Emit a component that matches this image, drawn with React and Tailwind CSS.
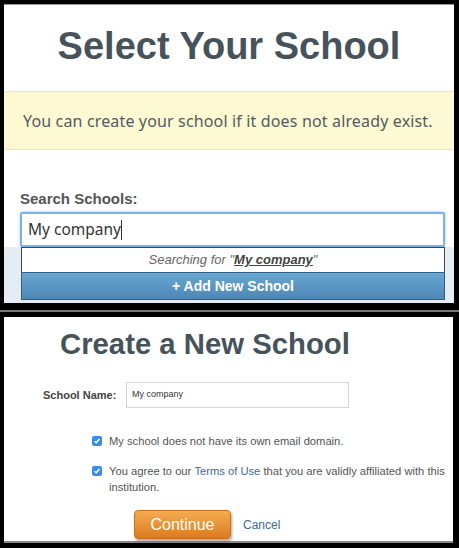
export default function App() {
  return (
    <div className="w-[459px] h-[548px] bg-black overflow-hidden" style={{ fontFamily: '"Liberation Sans", Arial, sans-serif' }}>
      <div className="pt-[4px] pl-[4px]">
        {/* Select panel */}
        <div className="w-[450px] h-[299px] bg-white border-t border-[#9a9a9a] flex flex-col">
          <h1 className="h-[86px] flex items-center justify-center text-[38px] font-bold text-[#46535b] pb-[4px]">
            Select Your School
          </h1>
          <div className="h-[59px] bg-[#fdf9d2] border-y border-[#f0e9a0] flex items-center pl-[19px]">
            <p className="text-[16px] tracking-[0.15px] text-[#555c60]" style={{ fontFamily: '"Noto Sans", "DejaVu Sans", sans-serif' }}>
              You can create your school if it does not already exist.
            </p>
          </div>
          <div className="flex-1 flex flex-col">
            <div className="bg-white pt-[40px] pl-[16px] pr-[9px]">
              <label className="block text-[15px] font-bold text-[#555] leading-[18px] mb-[4px]">Search Schools:</label>
              <div className="h-[35px] border-2 border-[#7bb2ea] rounded-[2px] shadow-[0_0_3px_#9cc6f0] flex items-center pl-[6px]">
                <span className="text-[15.5px] text-[#333]" style={{ fontFamily: '"Noto Sans", "DejaVu Sans", sans-serif' }}>My company</span>
                <span className="w-px h-[20px] bg-[#333]" />
              </div>
            </div>
            <div className="flex-1 bg-[#e4ecf4] pl-[17px] pr-[9px]">
              <div className="h-[25px] bg-white border border-[#444] border-b-0 flex items-center justify-center text-[13px] italic text-[#666]">
                <span>Searching for "</span>
                <span className="font-bold underline text-[#444]">My company</span>
                <span>"</span>
              </div>
              <div className="h-[28px] bg-gradient-to-b from-[#6aa7d2] to-[#4c87b6] border border-[#2f5e86] flex items-center justify-center text-[14px] font-bold text-white">
                + Add New School
              </div>
            </div>
          </div>
        </div>
      </div>

      <div className="mt-[7px] h-[2px] bg-[#7a7a7a]" />

      <div className="pl-[4px] pt-[5px]">
        {/* Create panel */}
        <div className="w-[449px] h-[226px] bg-white border-b-2 border-[#8a8a8a] flex flex-col">
          <h2 className="pl-[56px] pt-[10px] text-[29.3px] font-bold text-[#46535b] leading-[34px]">Create a New School</h2>
          <div className="flex items-center mt-[21px]">
            <span className="ml-[39px] w-[83px] text-[11px] font-bold text-[#444]">School Name:</span>
            <div className="w-[223px] h-[26px] border border-[#d4d4d4] flex items-center pl-[5px] text-[9px] text-[#333]">
              My company
            </div>
          </div>
          <div className="ml-[88px] mt-[25px] text-[11.2px] text-[#555] flex flex-col gap-[14px]">
            <label className="flex items-start gap-[7px]">
              <CheckBox />
              <span className="leading-[16px]">My school does not have its own email domain.</span>
            </label>
            <label className="flex items-start gap-[7px]">
              <CheckBox />
              <div className="leading-[16px] w-[345px]">
                <div className="flex whitespace-pre">
                  <span>You agree to our </span>
                  <span className="text-[#3d6b9d]">Terms of Use</span>
                  <span> that you are validly affiliated with this</span>
                </div>
                <div>institution.</div>
              </div>
            </label>
          </div>
          <div className="flex items-center ml-[130px] mt-[15px] gap-[12px]">
            <button className="w-[97px] h-[29px] rounded-[4px] bg-gradient-to-b from-[#f3ac4e] to-[#dc7b1e] border border-[#c8701c] shadow-[1px_2px_3px_rgba(0,0,0,0.35)] text-white text-[16px]">
              Continue
            </button>
            <a className="text-[12px] text-[#3d6b9d] no-underline">Cancel</a>
          </div>
        </div>
      </div>
    </div>
  );
}

function CheckBox() {
  return (
    <span className="mt-[3px] w-[10px] h-[10px] rounded-[2px] bg-[#3a8ee6] flex items-center justify-center shrink-0">
      <svg width="8" height="8" viewBox="0 0 8 8">
        <path d="M1.5 4.2 L3.2 5.8 L6.5 2" stroke="white" strokeWidth="1.4" fill="none" />
      </svg>
    </span>
  );
}
